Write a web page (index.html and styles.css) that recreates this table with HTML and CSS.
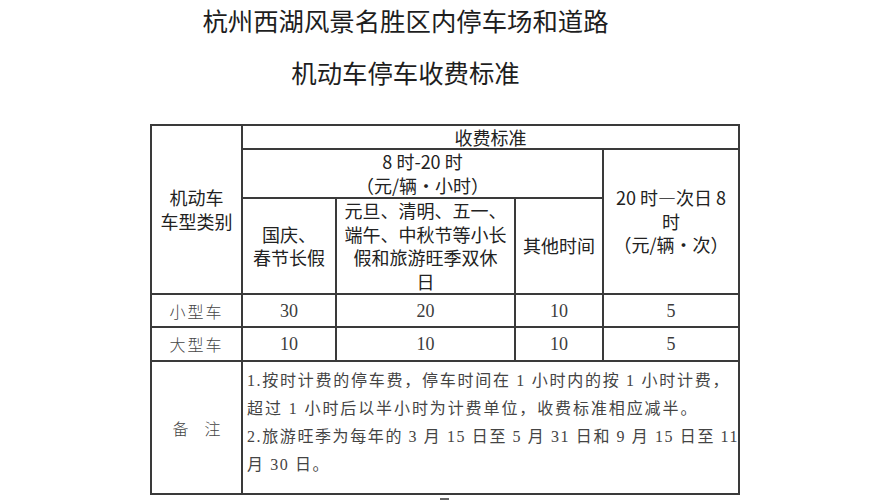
FILE: index.html
```html
<!DOCTYPE html>
<html lang="zh-CN">
<head>
<meta charset="utf-8">
<title>机动车停车收费标准</title>
<link rel="stylesheet" href="styles.css">
</head>
<body>
<div class="page">
  <h1 class="title"><span class="t1">杭州西湖风景名胜区内停车场和道路</span><span class="t2">机动车停车收费标准</span></h1>
  <table class="fees">
    <colgroup><col class="c1"><col class="c2"><col class="c3"><col class="c4"><col class="c5"></colgroup>
    <tr class="r1"><th rowspan="3" class="h-long">机动车<br>车型类别</th><th colspan="4" class="h-one">收费标准</th></tr>
    <tr class="r2"><th colspan="3" class="h-long">8 时-20 时<br>（元/辆・小时）</th><th rowspan="2" class="h-long">20 时—次日 8<br>时<br>（元/辆・次）</th></tr>
    <tr class="r3"><th class="h-long">国庆、<br>春节长假</th><th class="h-long">元旦、清明、五一、<br>端午、中秋节等小长<br>假和旅游旺季双休<br>日</th><th class="h-long">其他时间</th></tr>
    <tr class="r4"><td class="kind">小型车</td><td class="num">30</td><td class="num">20</td><td class="num">10</td><td class="num">5</td></tr>
    <tr class="r5"><td class="kind">大型车</td><td class="num">10</td><td class="num">10</td><td class="num">10</td><td class="num">5</td></tr>
    <tr class="r6"><td class="kind remark">备&ensp;&ensp;注</td><td colspan="4" class="notes"><span class="ln j">1.按时计费的停车费，停车时间在 1 小时内的按 1 小时计费，</span><span class="ln wide">超过 1 小时后以半小时为计费单位，收费标准相应减半。</span><span class="ln j">2.旅游旺季为每年的 3 月 15 日至 5 月 31 日和 9 月 15 日至 11</span><span class="ln">月 30 日。</span></td></tr>
  </table>
  <div class="mark"></div>
</div>
</body>
</html>
```
FILE: styles.css
```css
html, body {
  margin: 0;
  background: #fff;
}
body {
  font-family: "Noto Sans CJK SC", "Noto Sans", sans-serif;
  color: #222;
}
.page {
  margin-left: 150px;
  width: 588px;
}
.title {
  margin: 0;
  padding-right: 77px;
  font-weight: 400;
  font-size: 25.4px;
  color: #1e1e1e;
  text-align: center;
}
.t1, .t2 {
  display: block;
  line-height: 30px;
}
.t1 { padding-top: 5px; }
.t2 { margin-top: 22px; }

.fees {
  margin-top: 37px;
  border-collapse: collapse;
  table-layout: fixed;
  width: 588px;
}
.c1 { width: 91px; }
.c2 { width: 94px; }
.c3 { width: 179px; }
.c4 { width: 88px; }
.c5 { width: 136px; }

.fees th, .fees td {
  border: 2px solid #3a3a3a;
  padding: 0;
  text-align: center;
  vertical-align: middle;
}
.fees th {
  font-weight: 400;
  font-size: 18px;
  color: #222;
}
.h-one { line-height: 21px; }
.h-long { line-height: 23.5px; }

.r1 { height: 24px; }
.r2 { height: 49px; }
.r3 { height: 96px; }
.r4 { height: 33px; }
.r5 { height: 34px; }
.r6 { height: 133px; }

.num {
  font-family: "Liberation Serif", "Noto Sans CJK SC", serif;
  font-size: 18px;
  color: #3c3c3c;
  line-height: 20px;
}
.kind {
  font-family: "Noto Sans CJK SC", sans-serif;
  font-weight: 300;
  font-size: 16px;
  letter-spacing: 2px;
  color: #444;
  line-height: 20px;
}
.remark {
  letter-spacing: 0;
}
.fees td.notes {
  text-align: left;
  vertical-align: top;
  padding: 5px 8px 0 4px;
  font-family: "Liberation Serif", "Noto Sans CJK SC", serif;
  font-size: 16px;
  line-height: 28px;
  letter-spacing: 1.6px;
  color: #444;
}
.ln {
  display: block;
  white-space: nowrap;
}
.ln.j {
  text-align: justify;
  text-align-last: justify;
}
.ln.wide {
  letter-spacing: 1.9px;
}
.mark {
  width: 9px;
  height: 3px;
  background: #666;
  margin: 3px 0 0 290px;
}
```
